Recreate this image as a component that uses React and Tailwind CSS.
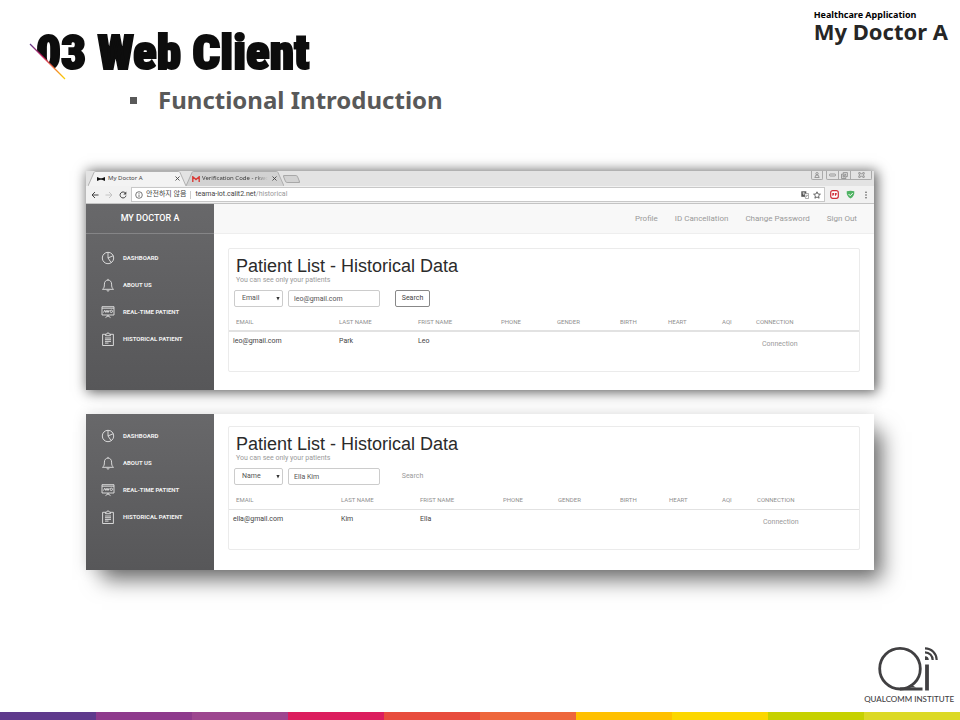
import React from "react";

const STRIPES = [
  "bg-[#5f3a8c]",
  "bg-[#8e3a8c]",
  "bg-[#9d468f]",
  "bg-[#dc1e5e]",
  "bg-[#e84c3d]",
  "bg-[#ee673c]",
  "bg-[#ffc000]",
  "bg-[#fcd700]",
  "bg-[#c6d100]",
  "bg-[#dcd925]",
];

const HEADINGS = ["EMAIL", "LAST NAME", "FRIST NAME", "PHONE", "GENDER", "BIRTH", "HEART", "AQI", "CONNECTION"];

const COLS_A = ["w-[110px]", "w-[79px]", "w-[83px]", "w-[56px]", "w-[63px]", "w-[48px]", "w-[54px]", "w-[34px]", ""];
const COLS_B = ["w-[112px]", "w-[79px]", "w-[83px]", "w-[55px]", "w-[62px]", "w-[49px]", "w-[53px]", "w-[35px]", ""];

function PieIcon() {
  return (
    <svg viewBox="0 0 14 14" className="size-[14px]" fill="none" stroke="#e4e4e4" strokeWidth="0.9">
      <circle cx="7" cy="7" r="5.7" />
      <path d="M7 1.3V7l3.2 4.7M7 7l5.2-2.3" />
    </svg>
  );
}

function BellIcon() {
  return (
    <svg viewBox="0 0 14 14" className="size-[14px]" fill="none" stroke="#e4e4e4" strokeWidth="0.9" strokeLinejoin="round">
      <path d="M1.5 11.3h11c-1.5-1.2-1.9-2.2-1.9-5.2C10.600 3.600 9 2.100 7 2.100S3.400 3.600 3.400 6.100c0 3-.4 4-1.900 5.200z" />
      <path d="M7 .9v1.200M6 12.200a1 1 0 0 0 2 0" />
    </svg>
  );
}

function BoardIcon() {
  return (
    <svg viewBox="0 0 14 14" className="size-[14px]" fill="none" stroke="#e4e4e4" strokeWidth="0.9" strokeLinejoin="round">
      <rect x="1" y="1.700" width="12" height="8.300" />
      <path d="M1 3.200h12M7 10v1.500M4.500 12.600L7 10.800l2.500 1.800" />
      <path d="M2.500 7.500l1.300-2.300 1.100 2.300 1.100-2.300 1 2.300 1.200-2.500" />
      <circle cx="10.300" cy="6.300" r="1.200" />
    </svg>
  );
}

function ClipboardIcon() {
  return (
    <svg viewBox="0 0 14 14" className="size-[14px]" fill="none" stroke="#e4e4e4" strokeWidth="0.9" strokeLinejoin="round">
      <path d="M4.300 2.300H1.600v11.200h10.800V2.300H9.700" />
      <path d="M4.500 3.700V2.100h1.300a1.200 1.200 0 0 1 2.400 0h1.300v1.600z" />
      <path d="M4 6h6M4 7.700h6M4 9.400h6M4 11.100h3.500" />
    </svg>
  );
}

const MENU = [
  { label: "DASHBOARD", Icon: PieIcon },
  { label: "ABOUT US", Icon: BellIcon },
  { label: "REAL-TIME PATIENT", Icon: BoardIcon },
  { label: "HISTORICAL PATIENT", Icon: ClipboardIcon },
];

function SideMenu({ className }) {
  return (
    <ul className={className}>
      {MENU.map(({ label, Icon }) => (
        <li key={label}>
          <a href="#" className="flex h-[27px] items-center gap-2 pl-[15px] text-[6px] font-bold text-[#f0f0f0]">
            <Icon />
            {label}
          </a>
        </li>
      ))}
    </ul>
  );
}

function PatientCard({ id, field, query, outlined, cols, patient, className }) {
  return (
    <section className={"h-[124px] rounded-[2px] border border-[#ebebeb] bg-white " + className}>
      <div className="px-[7px] pt-[7px]">
        <h3 className="font-['Liberation_Sans',sans-serif] text-[18px] leading-[20px] text-[#2b2b2b]">
          Patient List - Historical Data
        </h3>
        <p className="text-[7px] leading-[8px] text-[#9a9a9a]">You can see only your patients</p>
      </div>
      <form className="flex items-center pt-[6px] pl-[5px] text-[7px] text-[#555]" onSubmit={(e) => e.preventDefault()}>
        <div className="relative">
          <select
            aria-label="Search field"
            defaultValue={field}
            className="block h-[17px] w-[49px] appearance-none rounded-[2px] border border-[#ccc] bg-white pl-[7px]"
          >
            <option>Email</option>
            <option>Name</option>
          </select>
          <svg viewBox="0 0 4 4" className="pointer-events-none absolute top-[7px] right-[3px] size-1" fill="#333">
            <path d="M.4 0h3.200L2 3.600z" />
          </svg>
        </div>
        <input
          id={id}
          aria-label="Search text"
          defaultValue={query}
          className="ml-[5px] h-[17px] w-[92px] rounded-[2px] border border-[#ccc] bg-white px-[5px]"
        />
        <button
          type="submit"
          className={
            outlined
              ? "ml-[15px] h-[17px] w-[35px] rounded-[2px] border border-[#888] text-[#444]"
              : "ml-[15px] h-[17px] w-[35px] rounded-[2px] border border-transparent text-[#999]"
          }
        >
          Search
        </button>
      </form>
      <table className="mt-[6px] w-full table-fixed text-left text-[7px] whitespace-nowrap">
        <colgroup>
          {cols.map((c, i) => (
            <col key={i} className={c} />
          ))}
        </colgroup>
        <thead className={"border-[#e2e2e2] text-[6px] text-[#8f8f8f] " + (outlined ? "border-b-2" : "border-b")}>
          <tr className="h-[18px]">
            {HEADINGS.map((h) => (
              <th key={h} scope="col" className="font-normal first:pl-[7px]">
                {h}
              </th>
            ))}
          </tr>
        </thead>
        <tbody className="text-[#444]">
          <tr className="h-[24px]">
            {patient.map((v, i) => (
              <td key={i} className="pt-[5px] align-top leading-[8px] first:pl-1">
                {v}
              </td>
            ))}
            <td className="pt-[8px] pl-[6px] align-top leading-[8px] text-[#999]">
              <a href="#">Connection</a>
            </td>
          </tr>
        </tbody>
      </table>
    </section>
  );
}

function TabShape({ fill }) {
  return (
    <svg viewBox="0 0 98 15" preserveAspectRatio="none" className="absolute inset-0 size-full">
      <path d="M0 15L6 1.500Q6.500.5 7.500.5H90.500Q91.500.5 92 1.500L98 15" fill={fill} stroke="#a3a3a3" strokeWidth="0.8" />
    </svg>
  );
}

function BrowserBar() {
  return (
    <div className="font-['Noto_Sans','Noto_Sans_CJK_KR',sans-serif] text-[7px] text-[#444]">
      <div className="flex h-[15px] items-stretch bg-[#e3e3e3] pl-[2px]">
        <div className="relative z-10 w-[98px]">
          <TabShape fill="#f3f3f3" />
          <div className="relative flex h-full items-center pr-[6px] pl-[9px]">
            <svg viewBox="0 0 8 6" className="w-2" fill="#111">
              <path d="M0 1l3 1.300h2L8 1v4L5 3.700H3L0 5z" />
            </svg>
            <span className="ml-[3px] grow text-[6px]">My Doctor A</span>
            <button aria-label="Close My Doctor A">
              <svg viewBox="0 0 5 5" className="size-[5px]" stroke="#444" strokeWidth="0.9">
                <path d="M.5.5l4 4M4.500.5l-4 4" />
              </svg>
            </button>
          </div>
        </div>
        <div className="relative w-[98px]">
          <TabShape fill="#d2d2d2" />
          <div className="relative flex h-full items-center pr-[7px] pl-[6px]">
            <svg viewBox="0 0 8 6" className="w-2" fill="none" stroke="#d93a35" strokeWidth="1.400">
              <path d="M.8 6V.8L4 3.500 7.200.8V6" />
            </svg>
            <span className="ml-[2px] bg-gradient-to-r from-[#333] from-80% to-[#d2d2d2] bg-clip-text text-[6px] whitespace-nowrap text-transparent">
              Verification Code - rkwc
            </span>
            <button aria-label="Close Verification Code" className="ml-auto">
              <svg viewBox="0 0 5 5" className="size-[5px]" stroke="#444" strokeWidth="0.9">
                <path d="M.5.5l4 4M4.500.5l-4 4" />
              </svg>
            </button>
          </div>
        </div>
        <button aria-label="New tab" className="mt-1 h-2 w-[15px] skew-x-[22deg] rounded-[2px] border border-[#a8a8a8] bg-[#d2d2d2]" />
        <div className="mr-[2px] ml-auto flex h-[9px] gap-[3px] text-[#888]">
          <button aria-label="Account" className="flex w-3 items-center justify-center rounded-b-[2px] border border-t-0 border-[#aaa]">
            <svg viewBox="0 0 6 6" className="size-[6px]" fill="none" stroke="currentColor" strokeWidth="0.8">
              <circle cx="3" cy="1.700" r="1.200" />
              <path d="M.8 5.500L2 3h2l1.200 2.500z" />
            </svg>
          </button>
          <div className="flex divide-x divide-[#aaa] rounded-b-[2px] border border-t-0 border-[#aaa]">
            <button aria-label="Minimize" className="flex w-3 items-center justify-center">
              <svg viewBox="0 0 7 4" className="w-[7px]" fill="none" stroke="currentColor" strokeWidth="0.8">
                <rect x=".5" y="1" width="6" height="2" rx=".8" />
              </svg>
            </button>
            <button aria-label="Restore" className="flex w-3 items-center justify-center">
              <svg viewBox="0 0 7 7" className="size-[7px]" fill="none" stroke="currentColor" strokeWidth="0.8">
                <path d="M2.200 2V.6h4.200v4H5" />
                <rect x=".6" y="2.200" width="4.200" height="4.200" />
                <rect x="2" y="3.600" width="1.400" height="1.400" />
              </svg>
            </button>
            <button aria-label="Close" className="flex w-5 items-center justify-center">
              <svg viewBox="0 0 7 6" className="w-[7px]" fill="none" stroke="currentColor" strokeWidth="0.8">
                <path d="M.8.600h1.400v1.200h2.600V.6h1.400v1.600L5 3l1.200.8v1.600H4.800V4.200H2.200v1.200H.8V3.800L2 3 .8 2.200z" />
              </svg>
            </button>
          </div>
        </div>
      </div>
      <div className="flex h-[18px] items-center border-b border-[#c4c4c4] bg-[#f1f1f1] pr-[6px] pl-[5px]">
        <button aria-label="Back">
          <svg viewBox="0 0 8 8" className="size-2" fill="none" stroke="#444" strokeWidth="1">
            <path d="M7.500 4H1M4 1L1 4l3 3" />
          </svg>
        </button>
        <button aria-label="Forward" className="ml-[6px]">
          <svg viewBox="0 0 8 8" className="size-2" fill="none" stroke="#c4c4c4" strokeWidth="1">
            <path d="M.5 4H7M4 1l3 3-3 3" />
          </svg>
        </button>
        <button aria-label="Reload" className="ml-[6px]">
          <svg viewBox="0 0 8 8" className="size-2" fill="none" stroke="#444" strokeWidth="1">
            <path d="M6.500 2.200A3 3 0 1 0 7 4.600" />
            <path d="M7.300.5v3H4.300z" fill="#444" stroke="none" />
          </svg>
        </button>
        <div className="ml-1 flex h-[15px] grow items-center border border-[#c8c8c8] bg-white px-[3px] whitespace-nowrap">
          <svg viewBox="0 0 8 8" className="size-2" fill="none" stroke="#555" strokeWidth="0.8">
            <circle cx="4" cy="4" r="3.300" />
            <path d="M4 3.500V6M4 2v.8" />
          </svg>
          <span className="ml-[3px]">안전하지 않음</span>
          <span className="mx-1 h-2 w-px bg-[#ccc]" />
          <span className="font-['Roboto',sans-serif]">
            teama-iot.calit2.net<span className="text-[#999]">/historical</span>
          </span>
          <svg viewBox="0 0 8 8" className="ml-auto size-2" fill="none">
            <rect x=".3" y=".3" width="5" height="5.500" fill="#555" />
            <path d="M3.500 2.500h4v5h-3z" fill="#fff" stroke="#777" strokeWidth=".6" />
            <path d="M1.400 2h2.500M2.600 1.300v2.800" stroke="#fff" strokeWidth=".6" />
            <path d="M4.800 4.300h2M5 6.200l1.500-1.900" stroke="#777" strokeWidth=".6" />
          </svg>
          <svg viewBox="0 0 8 8" className="ml-1 size-2" fill="none" stroke="#444" strokeWidth="0.8">
            <path d="M4 .8l1 2.200 2.400.2-1.800 1.600.5 2.400L4 6 1.900 7.200l.5-2.400L.6 3.200 3 3z" />
          </svg>
        </div>
        <svg viewBox="0 0 9 9" className="ml-[5px] size-[9px]">
          <rect x=".7" y=".7" width="7.600" height="7.600" rx="2" fill="#fff" stroke="#cf2e37" strokeWidth="1.200" />
          <path d="M2.300 3h1.800v1.300l-.9 1.500h-.9zM4.900 3h1.800v1.300l-.9 1.500h-.9z" fill="#cf2e37" />
        </svg>
        <svg viewBox="0 0 9 9" className="ml-[7px] size-[9px]">
          <path d="M.7 1.200Q4.500.2 8.300 1.200 8.700 6 4.500 8.500.3 6 .7 1.200z" fill="#4fb263" />
          <path d="M2.600 4l1.600 1.700 2.500-2.600" fill="none" stroke="#fff" strokeWidth="1" />
        </svg>
        <svg viewBox="0 0 4 8" className="ml-[9px] h-2" fill="#555">
          <circle cx="2" cy="1.200" r=".8" />
          <circle cx="2" cy="4" r=".8" />
          <circle cx="2" cy="6.800" r=".8" />
        </svg>
      </div>
    </div>
  );
}

function QiLogo() {
  return (
    <div className="flex flex-col items-center text-[#414042]">
      <svg viewBox="0 0 62 46" className="h-[46px] w-[62px]" fill="none" stroke="currentColor">
        <circle cx="22" cy="22.700" r="20.300" strokeWidth="2.800" />
        <path d="M22 43h22.500" strokeWidth="3" />
        <path d="M28 41.500l5-3 5 3z" fill="currentColor" stroke="none" />
        <path d="M49 18.500v26" strokeWidth="3.800" />
        <path d="M47 6.300a7.700 7.700 0 0 1 7.700 7.700M47 2.300a11.700 11.700 0 0 1 11.700 11.700" strokeWidth="2.200" />
        <path d="M47 10.200a3.800 3.800 0 0 1 3.800 3.800H47z" fill="currentColor" stroke="none" />
      </svg>
      <p className="mt-[2px] font-['Lato',sans-serif] text-[8px] leading-[10px] font-medium whitespace-nowrap">QUALCOMM INSTITUTE</p>
    </div>
  );
}

export default function App() {
  return (
    <div className="flex min-h-screen flex-col bg-white font-['Roboto','Liberation_Sans',sans-serif]">
      <header className="flex items-start justify-between pr-3 pl-9">
        <div className="relative pt-6">
          <h1 className="font-[Impact,'Roboto_Condensed','Roboto',sans-serif] text-[49px] leading-[58px] font-black whitespace-nowrap text-[#0d0d0d] [-webkit-text-stroke:2px_#0d0d0d]">
            03 Web Client
          </h1>
          <svg viewBox="0 0 38 38" className="absolute top-[43px] -left-[7px] size-[38px]">
            <defs>
              <linearGradient id="slash" x1="0" y1="0" x2="1" y2="1">
                <stop offset="0" stopColor="#5f3a8c" />
                <stop offset=".35" stopColor="#c81e5e" />
                <stop offset=".65" stopColor="#ee673c" />
                <stop offset="1" stopColor="#fcd700" />
              </linearGradient>
            </defs>
            <path d="M0 0L36 36H0z" fill="#fff" />
            <path d="M1 1L36 36" stroke="url(#slash)" strokeWidth="1.200" />
          </svg>
        </div>
        <div className="pt-[9px] font-['Noto_Sans',sans-serif] font-bold whitespace-nowrap">
          <p className="text-[9px] leading-[12px] text-black">Healthcare Application</p>
          <p className="text-[22px] leading-[20px] text-[#262626]">My Doctor A</p>
        </div>
      </header>

      <h2 className="flex items-center gap-[21px] pl-[130px] font-['Noto_Sans',sans-serif] text-[24px] leading-[36px] font-bold text-[#595959]">
        <span className="size-[7px] bg-[#595959]" />
        Functional Introduction
      </h2>

      <main className="flex flex-col gap-6 px-[86px] pt-[53px]">
        <article className="shadow-[2px_1px_12px_1px_rgba(0,0,0,0.65)]">
          <BrowserBar />
          <div className="flex">
            <aside className="w-32 shrink-0 bg-gradient-to-b from-[#68686a] to-[#575759]">
              <p className="flex h-[30px] items-center justify-center border-b border-[#858587] text-[9px] font-medium text-white">MY DOCTOR A</p>
              <SideMenu className="pt-[10px]" />
            </aside>
            <div className="grow bg-white">
              <nav className="flex h-[30px] items-center justify-end gap-[17px] border-b border-[#eee] bg-[#f8f8f8] pr-[17px] text-[8px] text-[#9a9a9a]">
                <a href="#">Profile</a>
                <a href="#">ID Cancellation</a>
                <a href="#">Change Password</a>
                <a href="#">Sign Out</a>
              </nav>
              <PatientCard
                id="search-email"
                field="Email"
                query="leo@gmail.com"
                outlined
                cols={COLS_A}
                patient={["leo@gmail.com", "Park", "Leo", "", "", "", "", ""]}
                className="mt-[14px] mr-[14px] mb-[18px] ml-[14px]"
              />
            </div>
          </div>
        </article>

        <article className="flex shadow-[12px_14px_20px_-4px_rgba(0,0,0,0.55),0_0_14px_rgba(0,0,0,0.12)]">
          <aside className="w-32 shrink-0 bg-gradient-to-b from-[#68686a] to-[#575759]">
            <SideMenu className="pt-[8px]" />
          </aside>
          <div className="grow bg-white">
            <PatientCard
              id="search-name"
              field="Name"
              query="Ella Kim"
              cols={COLS_B}
              patient={["ella@gmail.com", "Kim", "Ella", "", "", "", "", ""]}
              className="mt-[12px] mr-[14px] mb-[20px] ml-[14px]"
            />
          </div>
        </article>
      </main>

      <footer className="mt-auto">
        <div className="flex justify-end pr-[6px] pb-2">
          <QiLogo />
        </div>
        <div className="grid h-2 grid-cols-10">
          {STRIPES.map((c) => (
            <div key={c} className={c} />
          ))}
        </div>
      </footer>
    </div>
  );
}
